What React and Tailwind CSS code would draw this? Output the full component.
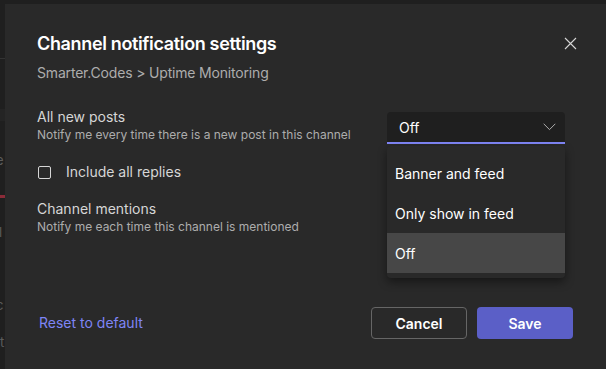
import { useState } from "react";

const options = ["Banner and feed", "Only show in feed", "Off"];

function Backdrop() {
    // sliver of the Teams window showing behind the dialog
    return (
        <div className="w-[5px] shrink-0 overflow-hidden flex flex-col text-[13px] leading-none text-[#5c5c5c]">
            <div className="h-[54px]" />
            <div className="h-px bg-[#333333]" />
            <div className="h-[50px]" />
            <div className="h-[12px] bg-[#242424]" />
            <div className="h-[33px]" />
            <div className="-ml-[4px]">e</div>
            <div className="h-[28px]" />
            <div className="h-[3px] bg-[#8b2b38]" />
            <div className="h-[28px]" />
            <div className="-ml-[1px]">l</div>
            <div className="h-[60px]" />
            <div className="-ml-[4px]">c</div>
            <div className="h-[24px]" />
            <div>ti</div>
        </div>
    );
}

function Dropdown({ value }) {
    return (
        <div className="relative mt-[5px] w-[178px]">
            <div className="flex h-[32px] items-center justify-between rounded-t-[4px] border-b-2 border-[#7f85f5] bg-[#1f1f1f] pl-[12px] pr-[9px]">
                <span className="text-[14px] text-white">{value}</span>
                <svg width="13" height="8" viewBox="0 0 13 8" fill="none">
                    <path d="M0.7 0.8 L6.5 6.6 L12.3 0.8" stroke="#adadad" strokeWidth="1" />
                </svg>
            </div>

            <div className="absolute left-0 top-[34px] w-full rounded-[4px] bg-[#292929] pt-[7px] pb-[5px] shadow-[0_4px_10px_rgba(0,0,0,0.45)]">
                {options.map((o) => (
                    <div
                        key={o}
                        className={`flex h-[40px] items-center px-[8px] text-[14px] text-white ${o === value ? "bg-[#474747]" : ""}`}
                    >
                        {o}
                    </div>
                ))}
            </div>
        </div>
    );
}

export default function App() {
    const [replies, setReplies] = useState(false);

    return (
        <div className="flex h-[369px] w-[606px] overflow-hidden bg-[#1f1f1f] pt-[4px] font-['Inter',sans-serif]">
            <Backdrop />

            <div className="relative flex-1 bg-[#292929] pl-[32px] pr-[33px] pt-[28px]">
                <button className="absolute right-[28px] top-[32px] p-[1px]">
                    <svg width="13" height="13" viewBox="0 0 13 13" fill="none">
                        <path d="M1 1 L12 12 M12 1 L1 12" stroke="#d6d6d6" strokeWidth="1.1" />
                    </svg>
                </button>

                <h1 className="text-[18px] font-semibold leading-[24px] tracking-[-0.35px] text-white">Channel notification settings</h1>
                <p className="mt-[7px] text-[14px] leading-[20px] tracking-[-0.18px] text-[#adadad]">Smarter.Codes &gt; Uptime Monitoring</p>

                <div className="mt-[24px] flex items-start justify-between pr-[8px]">
                    <div className="flex flex-col">
                        <span className="text-[14px] leading-[20px] text-[#d6d6d6]">All new posts</span>
                        <span className="text-[12px] leading-[16px] text-[#adadad]">Notify me every time there is a new post in this channel</span>
                    </div>
                    <Dropdown value="Off" />
                </div>

                <label className="mt-[18px] flex items-center gap-[15px] pl-[1px]" onClick={() => setReplies(!replies)}>
                    <span className="h-[13px] w-[13px] rounded-[2px] border border-[#d6d6d6]" />
                    <span className="text-[14px] leading-[20px] text-[#d6d6d6]">Include all replies</span>
                </label>

                <div className="mt-[17px] flex flex-col">
                    <span className="text-[14px] leading-[20px] text-[#d6d6d6]">Channel mentions</span>
                    <span className="text-[12px] leading-[16px] text-[#adadad]">Notify me each time this channel is mentioned</span>
                </div>

                <div className="mt-[72px] flex items-center justify-between">
                    <button className="pl-[2px] text-[14px] leading-[20px] text-[#7f85f5]">Reset to default</button>
                    <div className="flex gap-[10px]">
                        <button className="h-[32px] w-[96px] rounded-[4px] border border-[#666666] text-[14px] font-semibold text-white">Cancel</button>
                        <button className="h-[32px] w-[96px] rounded-[4px] bg-[#5b5fc7] text-[14px] font-semibold text-white">Save</button>
                    </div>
                </div>
            </div>
        </div>
    );
}
